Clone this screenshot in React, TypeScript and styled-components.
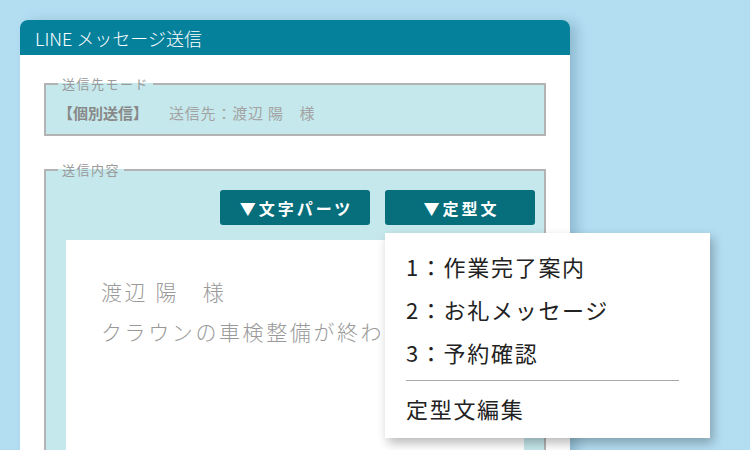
import styled, { createGlobalStyle } from "styled-components";

const GlobalStyle = createGlobalStyle`
  html, body {
    margin: 0;
    padding: 0;
    overflow: hidden;
  }
  body {
    font-family: "Noto Sans CJK JP", "Noto Sans", sans-serif;
  }
`;

const Page = styled.div`
  width: 750px;
  height: 450px;
  box-sizing: border-box;
  padding: 20px 0 0 20px;
  background: #b3ddf1;
  overflow: hidden;
`;

const Window = styled.div`
  width: 550px;
  min-height: 470px;
  background: #fff;
  border-radius: 8px 8px 0 0;
  box-shadow: 7px 2px 12px rgba(20, 70, 100, 0.22);
  display: flex;
  flex-direction: column;
`;

const TitleBar = styled.div`
  flex-shrink: 0;
  height: 35px;
  display: flex;
  align-items: center;
  padding-left: 15px;
  background: #05819c;
  border-radius: 8px 8px 0 0;
  color: #fff;
  font-size: 18px;
  font-weight: 300;
`;

const Body = styled.div`
  flex-shrink: 0;
  padding: 22px 24px 0;
  display: flex;
  flex-direction: column;
`;

const Fieldset = styled.fieldset<{ $gap?: number }>`
  flex-shrink: 0;
  margin: ${(p) => p.$gap ?? 0}px 0 0;
  padding: 0 9px 0 12px;
  min-width: 0;
  border: 2px solid #b3b3b3;
  background: #c5e8ec;
`;

const Legend = styled.legend`
  padding: 0 4px;
  font-size: 13px;
  line-height: 14px;
  letter-spacing: 1.5px;
  color: #9a9a9a;
`;

const TargetRow = styled.div`
  display: flex;
  align-items: center;
  gap: 21px;
  padding: 11px 0 10px;
  font-size: 15px;
  line-height: 22px;
`;

const Mode = styled.span`
  font-weight: 700;
  color: #888;
`;

const Target = styled.span`
  color: #a3a3a3;
  letter-spacing: 0.8px;
`;

const ButtonRow = styled.div`
  display: flex;
  justify-content: flex-end;
  gap: 15px;
  padding-top: 13px;
`;

const MenuAnchor = styled.div`
  position: relative;
`;

const Button = styled.button`
  width: 150px;
  height: 35px;
  border: 0;
  border-radius: 3px;
  background: #076e7c;
  color: #fff;
  font-family: inherit;
  font-size: 16px;
  font-weight: 700;
  letter-spacing: 3px;
  padding: 0 0 0 3px;
  cursor: pointer;
`;

const MessageBox = styled.div`
  margin: 15px 11px 0 8px;
  height: 230px;
  padding: 31px 35px;
  background: #fff;
  color: #999;
  font-size: 21px;
  font-weight: 300;
  line-height: 40px;
  letter-spacing: 2.6px;
  white-space: pre;
  overflow: hidden;
`;

const Dropdown = styled.ul`
  position: absolute;
  top: 43px;
  left: 0;
  width: 325px;
  box-sizing: border-box;
  margin: 0;
  padding: 12px 31px 8px 21px;
  list-style: none;
  background: #fff;
  box-shadow: 3px 5px 10px rgba(0, 0, 0, 0.28);
  z-index: 2;
`;

const Item = styled.li`
  font-size: 22px;
  line-height: 43px;
  letter-spacing: 1.7px;
  color: #222;
  white-space: nowrap;
`;

const Divider = styled.li`
  height: 1px;
  margin: 6px 0;
  background: #a8a8a8;
`;

const templates = ["1：作業完了案内", "2：お礼メッセージ", "3：予約確認"];

export default function App() {
  return (
    <Page>
      <GlobalStyle />
      <Window>
        <TitleBar>LINE メッセージ送信</TitleBar>
        <Body>
          <Fieldset>
            <Legend>送信先モード</Legend>
            <TargetRow>
              <Mode>【個別送信】</Mode>
              <Target>送信先：渡辺 陽　様</Target>
            </TargetRow>
          </Fieldset>
          <Fieldset $gap={27}>
            <Legend>送信内容</Legend>
            <ButtonRow>
              <Button>▼文字パーツ</Button>
              <MenuAnchor>
                <Button>▼定型文</Button>
                <Dropdown>
                  {templates.map((t) => (
                    <Item key={t}>{t}</Item>
                  ))}
                  <Divider />
                  <Item>定型文編集</Item>
                </Dropdown>
              </MenuAnchor>
            </ButtonRow>
            <MessageBox>
              {"渡辺 陽　様\nクラウンの車検整備が終わりました。"}
            </MessageBox>
          </Fieldset>
        </Body>
      </Window>
    </Page>
  );
}
